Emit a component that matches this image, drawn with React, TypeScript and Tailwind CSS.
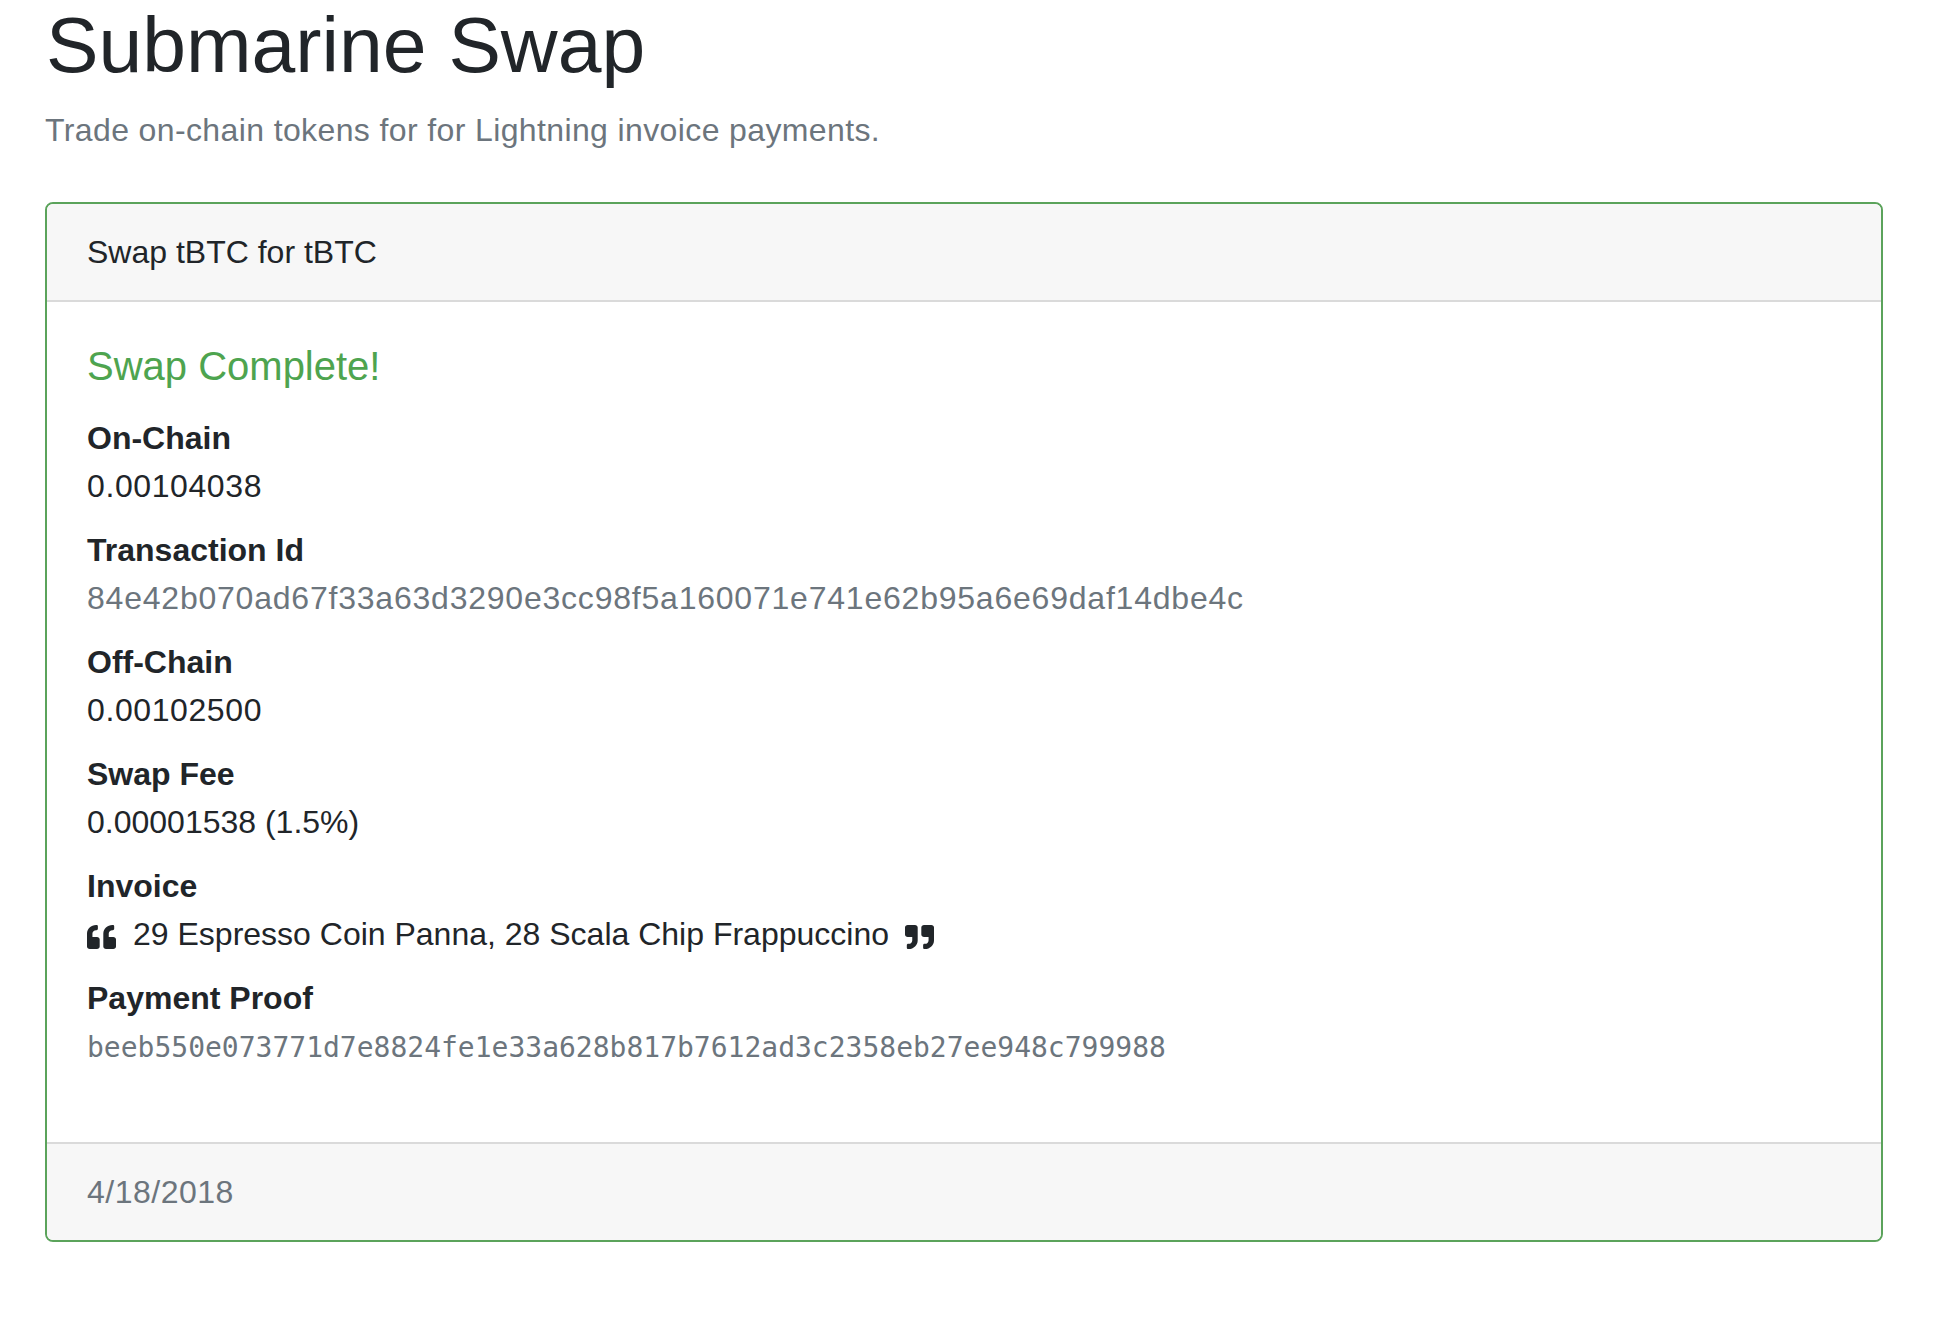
import React from 'react';

const quoteLeft =
  'M464 256h-80v-64c0-35.3 28.7-64 64-64h8c13.3 0 24-10.7 24-24V56c0-13.3-10.7-24-24-24h-8c-88.4 0-160 71.6-160 160v240c0 26.5 21.5 48 48 48h128c26.5 0 48-21.5 48-48V304c0-26.5-21.5-48-48-48zm-288 0H96v-64c0-35.3 28.7-64 64-64h8c13.3 0 24-10.7 24-24V56c0-13.3-10.7-24-24-24h-8C71.6 32 0 103.6 0 192v240c0 26.5 21.5 48 48 48h128c26.5 0 48-21.5 48-48V304c0-26.5-21.5-48-48-48z';
const quoteRight =
  'M464 32H336c-26.5 0-48 21.5-48 48v128c0 26.5 21.5 48 48 48h80v64c0 35.3-28.7 64-64 64h-8c-13.3 0-24 10.7-24 24v48c0 13.3 10.7 24 24 24h8c88.4 0 160-71.6 160-160V80c0-26.5-21.5-48-48-48zm-288 0H48C21.5 32 0 53.5 0 80v128c0 26.5 21.5 48 48 48h80v64c0 35.3-28.7 64-64 64h-8c-13.3 0-24 10.7-24 24v48c0 13.3 10.7 24 24 24h8c88.4 0 160-71.6 160-160V80c0-26.5-21.5-48-48-48z';

function Quote({ d, className }: { d: string; className?: string }) {
  return (
    <svg viewBox="0 32 512 448" preserveAspectRatio="none" className={`inline-block h-[24px] w-[29px] fill-[#212529] ${className ?? ''}`}>
      <path d={d} />
    </svg>
  );
}

function Field({ label, children, last }: { label: string; children: React.ReactNode; last?: boolean }) {
  return (
    <>
      <dt className="font-bold leading-[48px]">{label}</dt>
      <dd className={`leading-[48px] ${last ? '' : 'mb-[16px]'}`}>{children}</dd>
    </>
  );
}

export default function App() {
  return (
    <div className="min-h-screen bg-white pl-[45px] pr-[65px] text-[32px] text-[#212529] font-['Liberation_Sans',Arial,sans-serif]">
      <h1 className="pl-[1px] text-[78.7px] font-normal leading-[90px]">Submarine Swap</h1>
      <p className="mt-[16px] leading-[48px] tracking-[0.38px] text-[#6c757d]">Trade on-chain tokens for for Lightning invoice payments.</p>

      <div className="mt-[48px] overflow-hidden rounded-[8px] border-2 border-[#5ba35b]">
        <div className="border-b-2 border-[#dadada] bg-[#f7f7f7] px-[40px] py-[24px] leading-[48px]">Swap tBTC for tBTC</div>

        <div className="p-[40px]">
          <h5 className="mb-[24px] text-[40px] leading-[48px] text-[#4ea44f]">Swap Complete!</h5>
          <dl className="mb-[30px]">
            <Field label="On-Chain">
              <span className="tracking-[0.6px]">0.00104038</span>
            </Field>
            <Field label="Transaction Id">
              <span className="tracking-[0.78px] text-[#6c757d]">84e42b070ad67f33a63d3290e3cc98f5a160071e741e62b95a6e69daf14dbe4c</span>
            </Field>
            <Field label="Off-Chain">
              <span className="tracking-[0.6px]">0.00102500</span>
            </Field>
            <Field label="Swap Fee">
              <span>0.00001538 (1.5%)</span>
            </Field>
            <Field label="Invoice">
              <Quote d={quoteLeft} className="mr-[17px]" />
              <span>29 Espresso Coin Panna, 28 Scala Chip Frappuccino</span>
              <Quote d={quoteRight} className="ml-[16px]" />
            </Field>
            <Field label="Payment Proof" last>
              <code className="text-[28px] text-[#6c757d] font-['DejaVu_Sans_Mono',monospace]">
                beeb550e073771d7e8824fe1e33a628b817b7612ad3c2358eb27ee948c799988
              </code>
            </Field>
          </dl>
        </div>

        <div className="border-t-2 border-[#dadada] bg-[#f7f7f7] px-[40px] py-[24px] leading-[48px] tracking-[0.5px] text-[#6c757d]">4/18/2018</div>
      </div>
    </div>
  );
}
